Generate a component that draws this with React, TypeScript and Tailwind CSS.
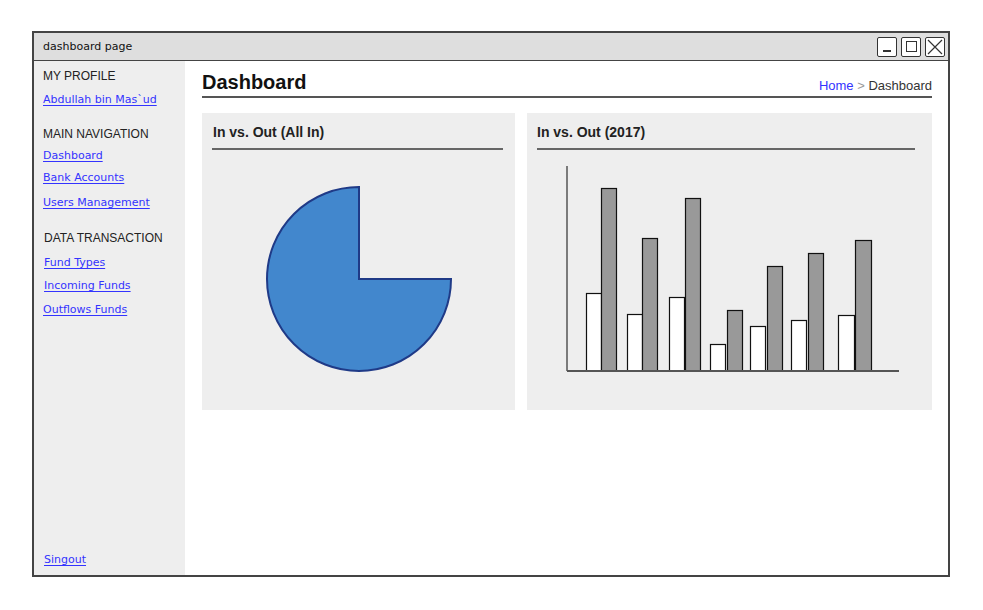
import React from "react";

const hand = { fontFamily: '"DejaVu Sans", "Noto Sans", sans-serif' };
const sans = { fontFamily: '"Liberation Sans", Arial, sans-serif' };

function NavLink({ children, className = "" }: { children: React.ReactNode; className?: string }) {
  return (
    <a
      href="#"
      style={hand}
      className={"block h-4 text-[11px] leading-4 text-[#3333ff] underline underline-offset-2 whitespace-nowrap " + className}
    >
      {children}
    </a>
  );
}

const bars = [
  { w: 59.5, wt: 143.5, g: 74.5, gt: 38.5, bw: 15 },
  { w: 100.5, wt: 164.5, g: 115.5, gt: 88.5, bw: 15 },
  { w: 142.5, wt: 147.5, g: 158.5, gt: 48.5, bw: 15 },
  { w: 183.5, wt: 194.5, g: 200.5, gt: 160.5, bw: 15 },
  { w: 223.5, wt: 176.5, g: 240.5, gt: 116.5, bw: 15 },
  { w: 264.5, wt: 170.5, g: 281.5, gt: 103.5, bw: 15 },
  { w: 311.5, wt: 165.5, g: 328.5, gt: 90.5, bw: 16 },
];

export default function App() {
  return (
    <div className="w-[983px] h-[610px] bg-white pt-[31px] pl-[32px]" style={sans}>
      <div className="w-[918px] h-[546px] border-2 border-[#444] flex flex-col bg-white">
        {/* title bar */}
        <div className="h-[28px] bg-[#dedede] border-b border-[#444] flex items-center justify-between pl-[9px] pr-[3px]">
          <span style={hand} className="text-[11px] text-[#111] leading-4">dashboard page</span>
          <div className="flex gap-[4px]">
            <div className="w-[20px] h-[20px] border-[1.5px] border-[#333] rounded-[2px] bg-white flex items-end justify-center pb-[4px]">
              <div className="w-[8px] h-[1.5px] bg-[#333]" />
            </div>
            <div className="w-[20px] h-[20px] border-[1.5px] border-[#333] rounded-[2px] bg-white flex items-center justify-center">
              <div className="w-[11px] h-[11px] border-[1.5px] border-[#333]" />
            </div>
            <div className="w-[20px] h-[20px] border-[1.5px] border-[#333] rounded-[2px] bg-white flex items-center justify-center">
              <svg width="16" height="16" viewBox="0 0 16 16">
                <path d="M1 1 L15 15 M15 1 L1 15" stroke="#333" strokeWidth="1.2" />
              </svg>
            </div>
          </div>
        </div>
        <div className="flex flex-1">
          {/* sidebar */}
          <aside className="w-[151px] bg-[#eeeeee] flex flex-col justify-between pl-[9px] pt-[7px] pb-[7px]">
            <div className="flex flex-col">
              <div className="h-4 leading-4 text-[12px] text-[#222]">MY PROFILE</div>
              <NavLink className="mt-[8px]">Abdullah bin Mas`ud</NavLink>
              <div className="mt-[18px] h-4 leading-4 text-[12px] text-[#222]">MAIN NAVIGATION</div>
              <NavLink className="mt-[6px]">Dashboard</NavLink>
              <NavLink className="mt-[6px]">Bank Accounts</NavLink>
              <NavLink className="mt-[9px]">Users Management</NavLink>
              <div className="mt-[19px] ml-[1px] h-4 leading-4 text-[12px] text-[#222]">DATA TRANSACTION</div>
              <NavLink className="mt-[9px] ml-[1px]">Fund Types</NavLink>
              <NavLink className="mt-[7px] ml-[1px]">Incoming Funds</NavLink>
              <NavLink className="mt-[8px]">Outflows Funds</NavLink>
            </div>
            <NavLink className="ml-[1px]">Singout</NavLink>
          </aside>
          {/* content */}
          <main className="flex-1 pl-[17px] pr-[16px] pt-[9px]">
            <div className="flex items-end justify-between border-b-2 border-[#555] pb-[2px]">
              <h1 className="text-[20px] leading-6 font-bold text-[#111]">Dashboard</h1>
              <div className="text-[13px] leading-4">
                <a href="#" className="text-[#3333ff]">Home</a>
                <span className="text-[#999]"> &gt; </span>
                <span className="text-[#333]">Dashboard</span>
              </div>
            </div>
            <div className="flex gap-[12px] mt-[15px]">
              <section className="w-[313px] h-[297px] bg-[#eeeeee] pt-[10px]">
                <h2 className="text-[14px] leading-[18px] font-bold text-[#222] px-[11px]">In vs. Out (All In)</h2>
                <div className="ml-[10px] mr-[12px] mt-[7px] h-[2px] bg-[#666]" />
                <svg width="313" height="258" viewBox="0 0 313 258" className="block">
                  <path
                    d="M157 129 L157 37 A92 92 0 1 0 249 129 Z"
                    fill="#4287cd"
                    stroke="#1f3a87"
                    strokeWidth="2"
                    strokeLinejoin="miter"
                  />
                </svg>
              </section>
              <section className="flex-1 h-[297px] bg-[#eeeeee] pt-[10px]">
                <h2 className="text-[14px] leading-[18px] font-bold text-[#222] px-[10px]">In vs. Out (2017)</h2>
                <div className="ml-[10px] mr-[17px] mt-[7px] h-[2px] bg-[#666]" />
                <svg width="405" height="258" viewBox="0 0 405 258" className="block">
                  <line x1="40" y1="16" x2="40" y2="221" stroke="#555" strokeWidth="1.5" />
                  {bars.map((b, i) => (
                    <g key={i}>
                      <rect x={b.w} y={b.wt} width={b.bw} height={221 - b.wt} fill="#ffffff" stroke="#111" strokeWidth="1.2" />
                      <rect x={b.g} y={b.gt} width={b.bw} height={221 - b.gt} fill="#999999" stroke="#111" strokeWidth="1.2" />
                    </g>
                  ))}
                  <line x1="40" y1="221" x2="372" y2="221" stroke="#555" strokeWidth="1.8" />
                </svg>
              </section>
            </div>
          </main>
        </div>
      </div>
    </div>
  );
}
